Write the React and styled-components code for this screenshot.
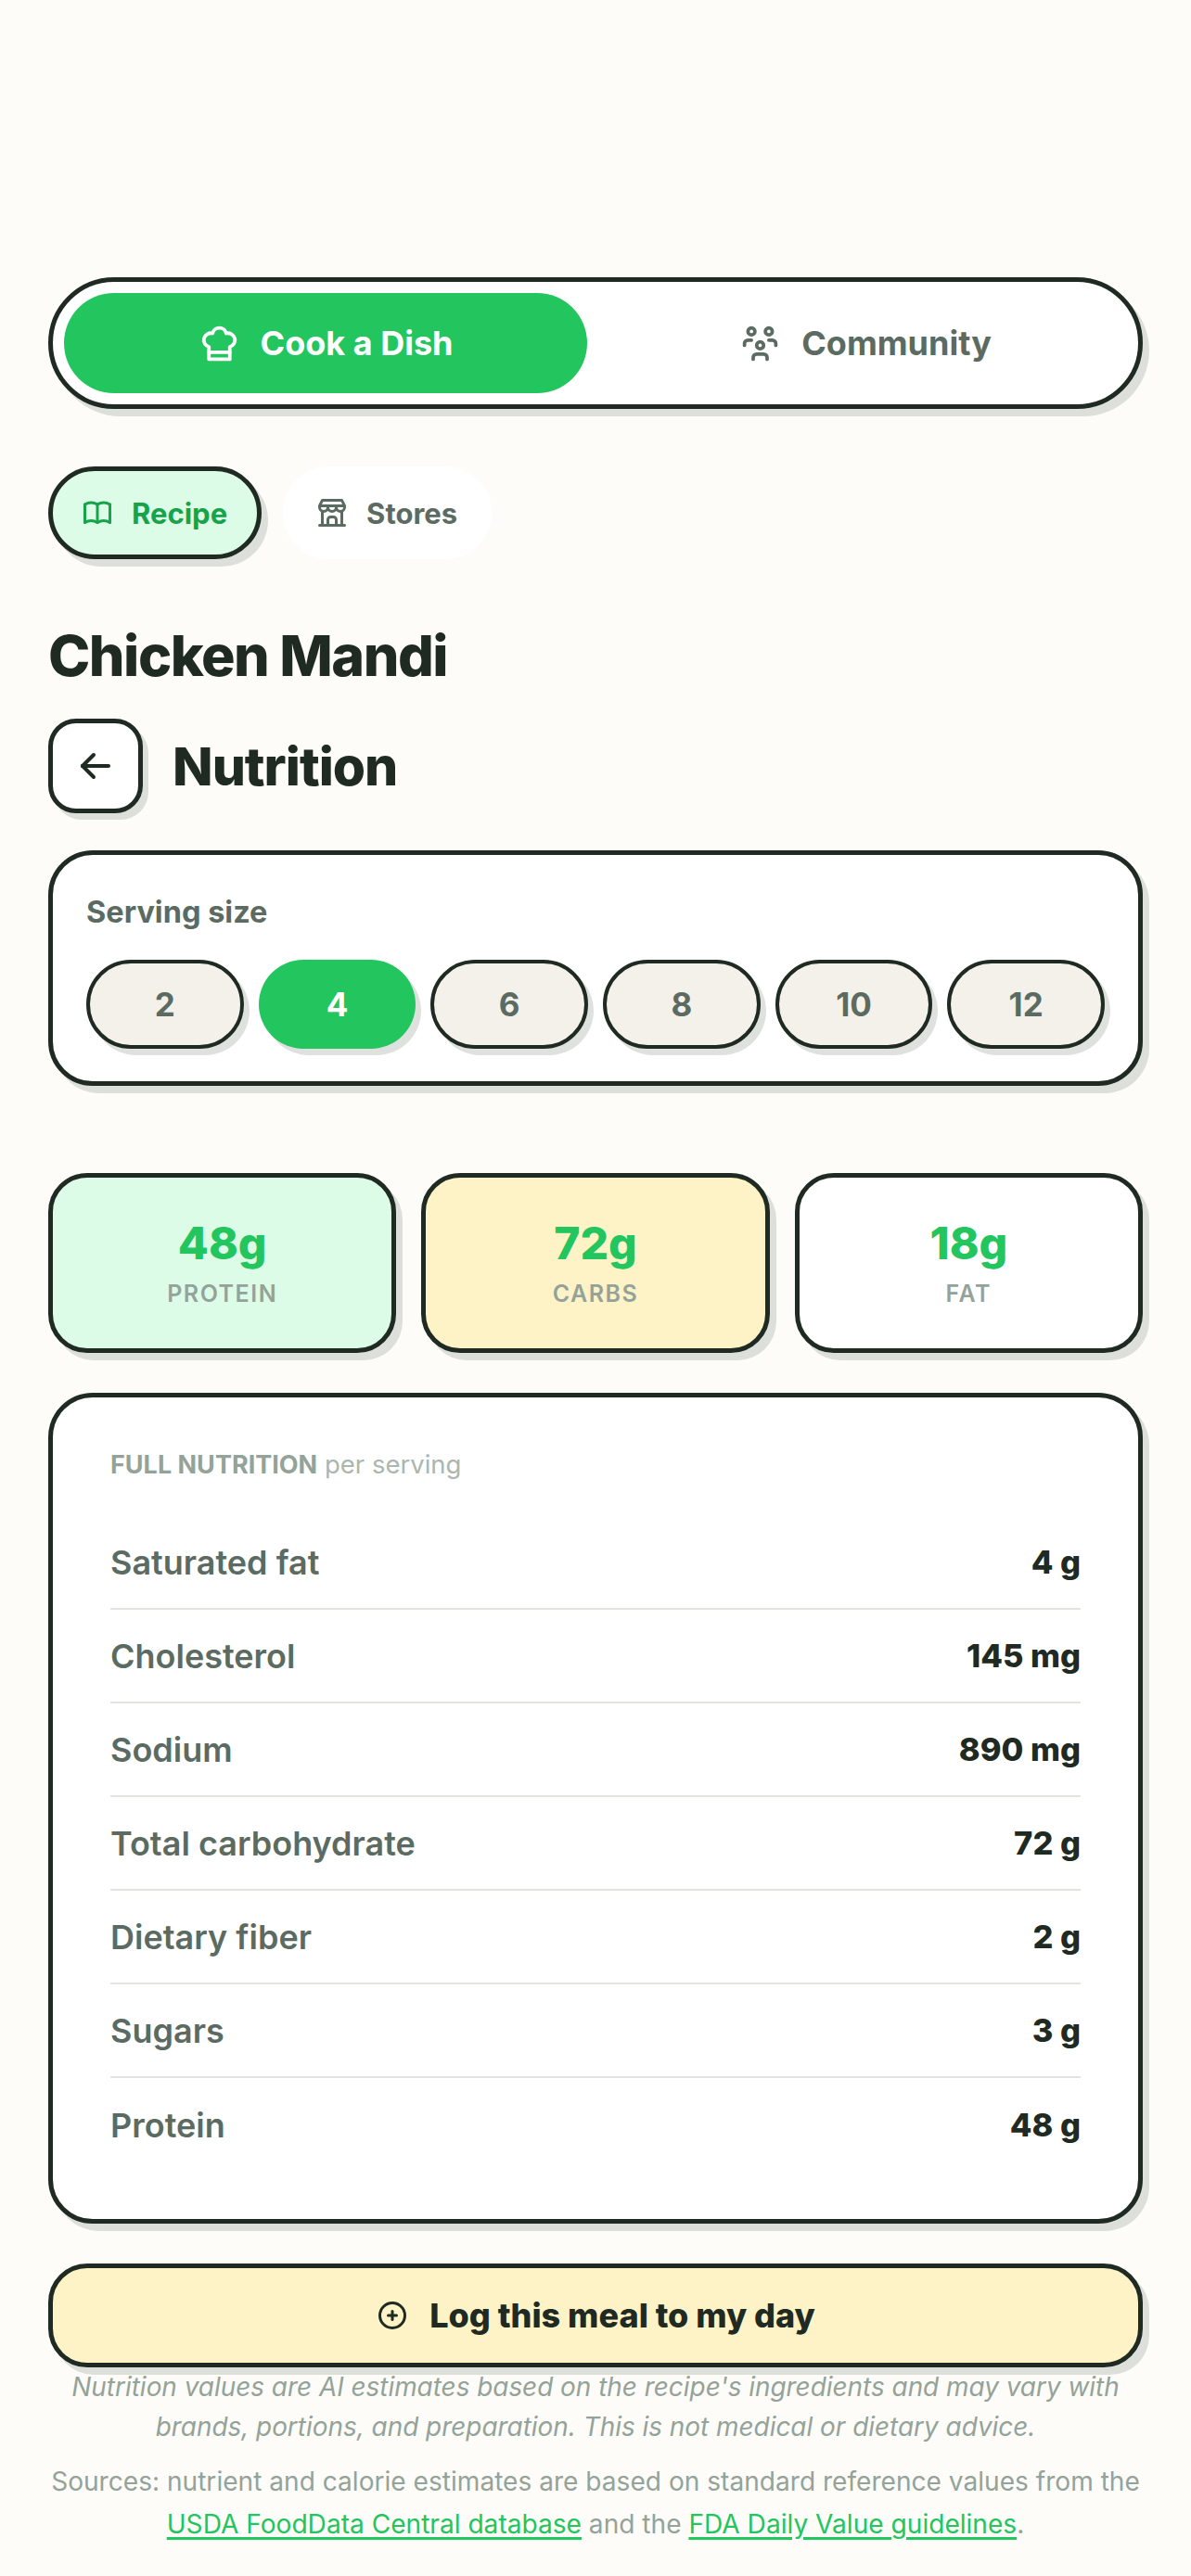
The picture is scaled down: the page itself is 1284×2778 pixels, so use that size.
import { TbArrowLeft, TbBook, TbBuildingStore, TbChefHat, TbCirclePlus, TbUsersGroup } from "react-icons/tb";
import styled, { createGlobalStyle } from "styled-components";

const ink = "#1f2a22";
const muted = "#5c6b62";
const soft = "#94a399";
const green = "#22c55e";

const GlobalStyle = createGlobalStyle`
  html, body {
    margin: 0;
    padding: 0;
    background: #fdfcf8;
  }
  body {
    font-family: Inter, "Noto Sans", sans-serif;
    color: ${ink};
  }
  * {
    box-sizing: border-box;
  }
`;

const Page = styled.div`
  width: 1284px;
  height: 2778px;
  padding: 299px 52px 0;
  overflow: hidden;
`;

const ModeBar = styled.div`
  display: flex;
  gap: 18px;
  height: 142px;
  padding: 12px;
  background: #fff;
  border: 5px solid ${ink};
  border-radius: 71px;
  box-shadow: 7px 8px 0 #dddfda;
`;

const ModeTab = styled.div`
  flex: 1;
  display: flex;
  align-items: center;
  justify-content: center;
  gap: 22px;
  border-radius: 54px;
  font-size: 36px;
  font-weight: 700;
  color: ${(p) => (p.$active ? "#fff" : muted)};
  background: ${(p) => (p.$active ? green : "transparent")};
`;

const SubTabs = styled.div`
  display: flex;
  gap: 23px;
  margin-top: 62px;
`;

const SubTab = styled.div`
  display: flex;
  align-items: center;
  gap: 19px;
  height: 100px;
  padding: 0 32px 0 30px;
  border-radius: 50px;
  font-size: 31px;
  font-weight: 700;
  color: ${(p) => (p.$active ? "#16a34a" : muted)};
  background: ${(p) => (p.$active ? "#dcfce7" : "#fff")};
  border: 5px solid ${(p) => (p.$active ? ink : "#fff")};
  box-shadow: ${(p) => (p.$active ? "7px 8px 0 #dddfda" : "none")};
`;

const Title = styled.h1`
  margin: 68px 0 0;
  font-size: 61px;
  line-height: 72px;
  font-weight: 800;
  letter-spacing: -1.5px;
`;

const Header = styled.div`
  display: flex;
  align-items: center;
  gap: 32px;
  margin-top: 32px;
`;

const BackButton = styled.div`
  display: flex;
  align-items: center;
  justify-content: center;
  width: 102px;
  height: 102px;
  background: #fff;
  border: 5px solid ${ink};
  border-radius: 30px;
  box-shadow: 6px 7px 0 #dddfda;
`;

const Heading = styled.h2`
  margin: 0;
  font-size: 57px;
  font-weight: 800;
  letter-spacing: -1px;
`;

const Card = styled.section`
  margin-top: ${(p) => p.$top}px;
  background: #fff;
  border: 5px solid ${ink};
  border-radius: 48px;
  box-shadow: 7px 8px 0 #dddfda;
`;

const ServingCard = styled(Card)`
  height: 254px;
  padding: 42px 36px 0;
`;

const Label = styled.div`
  font-size: 32.5px;
  font-weight: 700;
  color: ${muted};
  line-height: 40px;
`;

const Sizes = styled.div`
  display: grid;
  grid-template-columns: repeat(6, 1fr);
  gap: 16px;
  margin-top: 31px;
`;

const Size = styled.div`
  display: flex;
  align-items: center;
  justify-content: center;
  height: 96px;
  border-radius: 48px;
  font-size: 35px;
  font-weight: 700;
  color: ${(p) => (p.$active ? "#fff" : muted)};
  background: ${(p) => (p.$active ? green : "#f4f1ea")};
  border: ${(p) => (p.$active ? "none" : `4px solid ${ink}`)};
  box-shadow: 6px 7px 0 #dfe1df;
`;

const Macros = styled.div`
  display: grid;
  grid-template-columns: repeat(3, 1fr);
  gap: 27px;
  margin-top: 94px;
`;

const Macro = styled.div`
  height: 194px;
  display: flex;
  flex-direction: column;
  align-items: center;
  justify-content: center;
  background: ${(p) => p.$bg};
  border: 5px solid ${ink};
  border-radius: 42px;
  box-shadow: 7px 8px 0 #dddfda;
`;

const MacroValue = styled.div`
  font-size: 48px;
  line-height: 56px;
  font-weight: 800;
  color: ${green};
`;

const MacroName = styled.div`
  margin-top: 10px;
  font-size: 25px;
  line-height: 32px;
  font-weight: 600;
  letter-spacing: 1.5px;
  color: ${soft};
`;

const FactsCard = styled(Card)`
  height: 896px;
  padding: 54px 62px 0;
`;

const FactsTitle = styled.div`
  font-size: 27.5px;
  line-height: 36px;
  font-weight: 400;
  color: #abb6ae;
  margin-bottom: 37px;

  b {
    font-size: 27px;
    font-weight: 700;
    color: ${soft};
  }
`;

const Row = styled.div`
  display: flex;
  align-items: center;
  justify-content: space-between;
  height: 101px;
  border-bottom: ${(p) => (p.$last ? "none" : "2px solid #e2e4df")};
`;

const RowName = styled.span`
  font-size: 36px;
  font-weight: 600;
  color: ${muted};
`;

const RowValue = styled.span`
  font-size: 34.5px;
  font-weight: 800;
`;

const LogButton = styled.div`
  display: flex;
  align-items: center;
  justify-content: center;
  gap: 22px;
  height: 112px;
  margin-top: 43px;
  background: #fef3c7;
  border: 5px solid ${ink};
  border-radius: 42px;
  box-shadow: 7px 8px 0 #dddfda;
  font-size: 36px;
  font-weight: 800;
`;

const Disclaimer = styled.p`
  margin: 0;
  text-align: center;
  font-size: 27.9px;
  line-height: 43px;
  font-style: italic;
  color: ${soft};
`;

const Sources = styled.p`
  margin: 14px -10px 0;
  text-align: center;
  font-size: 28.1px;
  line-height: 46px;
  color: ${soft};

  a {
    color: ${green};
    text-decoration: underline;
    text-decoration-thickness: 3px;
    text-underline-offset: 4px;
  }
`;

const nutrition = [
  ["Saturated fat", "4 g"],
  ["Cholesterol", "145 mg"],
  ["Sodium", "890 mg"],
  ["Total carbohydrate", "72 g"],
  ["Dietary fiber", "2 g"],
  ["Sugars", "3 g"],
  ["Protein", "48 g"],
];

const App = () => {
  return (
    <Page>
      <GlobalStyle />
      <ModeBar>
        <ModeTab $active>
          <TbChefHat size={45} />
          Cook a Dish
        </ModeTab>
        <ModeTab>
          <TbUsersGroup size={45} />
          Community
        </ModeTab>
      </ModeBar>
      <SubTabs>
        <SubTab $active>
          <TbBook size={36} />
          Recipe
        </SubTab>
        <SubTab>
          <TbBuildingStore size={36} />
          Stores
        </SubTab>
      </SubTabs>
      <Title>Chicken Mandi</Title>
      <Header>
        <BackButton>
          <TbArrowLeft size={48} color={ink} />
        </BackButton>
        <Heading>Nutrition</Heading>
      </Header>
      <ServingCard $top={40}>
        <Label>Serving size</Label>
        <Sizes>
          {[2, 4, 6, 8, 10, 12].map((n) => (
            <Size key={n} $active={n === 4}>
              {n}
            </Size>
          ))}
        </Sizes>
      </ServingCard>
      <Macros>
        <Macro $bg="#dcfce7">
          <MacroValue>48g</MacroValue>
          <MacroName>PROTEIN</MacroName>
        </Macro>
        <Macro $bg="#fef3c7">
          <MacroValue>72g</MacroValue>
          <MacroName>CARBS</MacroName>
        </Macro>
        <Macro $bg="#fff">
          <MacroValue>18g</MacroValue>
          <MacroName>FAT</MacroName>
        </Macro>
      </Macros>
      <FactsCard $top={43}>
        <FactsTitle>
          <b>FULL NUTRITION</b> per serving
        </FactsTitle>
        {nutrition.map(([name, value], i) => (
          <Row key={name} $last={i === nutrition.length - 1}>
            <RowName>{name}</RowName>
            <RowValue>{value}</RowValue>
          </Row>
        ))}
      </FactsCard>
      <LogButton>
        <TbCirclePlus size={36} color={ink} />
        Log this meal to my day
      </LogButton>
      <Disclaimer>
        Nutrition values are AI estimates based on the recipe's ingredients and may vary with brands, portions, and preparation. This is not medical or dietary advice.
      </Disclaimer>
      <Sources>
        Sources: nutrient and calorie estimates are based on standard reference values from the{" "}
        <a href="#usda">USDA FoodData Central database</a> and the <a href="#fda">FDA Daily Value guidelines</a>.
      </Sources>
    </Page>
  );
};

export default App;
